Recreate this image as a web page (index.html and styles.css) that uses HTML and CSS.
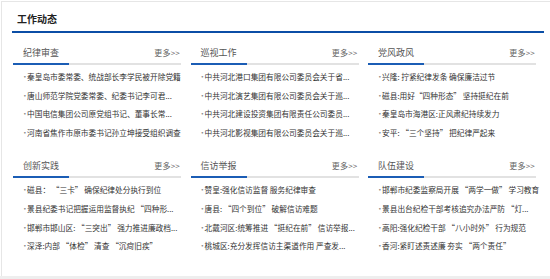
FILE: index.html
```html
<!DOCTYPE html>
<html lang="zh">
<head>
<meta charset="utf-8">
<link rel="stylesheet" href="styles.css">
</head>
<body>
<div class="panel">
  <div class="title-bar"><h2 class="title">工作动态</h2></div>
  <div class="grid">
    <section class="box">
      <div class="box-head"><span class="box-name">纪律审查</span><a class="more">更多&gt;&gt;</a></div>
      <ul class="list">
        <li>秦皇岛市委常委、统战部长李学民被开除党籍</li>
        <li>唐山师范学院党委常委、纪委书记李可君...</li>
        <li>中国电信集团公司原党组书记、董事长常...</li>
        <li>河南省焦作市原市委书记孙立坤接受组织调查</li>
      </ul>
    </section>
    <section class="box">
      <div class="box-head"><span class="box-name">巡视工作</span><a class="more">更多&gt;&gt;</a></div>
      <ul class="list">
        <li>中共河北港口集团有限公司委员会关于省...</li>
        <li>中共河北演艺集团有限公司委员会关于巡...</li>
        <li>中共河北建设投资集团有限责任公司委员...</li>
        <li>中共河北影视集团有限公司委员会关于巡...</li>
      </ul>
    </section>
    <section class="box">
      <div class="box-head"><span class="box-name">党风政风</span><a class="more">更多&gt;&gt;</a></div>
      <ul class="list">
        <li>兴隆: 拧紧纪律发条 确保廉洁过节</li>
        <li>磁县:用好“四种形态” 坚持挺纪在前</li>
        <li>秦皇岛市海港区:正风肃纪持续发力</li>
        <li>安平: “三个坚持” 把纪律严起来</li>
      </ul>
    </section>
    <section class="box">
      <div class="box-head"><span class="box-name">创新实践</span><a class="more">更多&gt;&gt;</a></div>
      <ul class="list">
        <li>磁县： “三卡” 确保纪律处分执行到位</li>
        <li>景县纪委书记把握运用监督执纪 “四种形...</li>
        <li>邯郸市邯山区: “三突出” 强力推进廉政档...</li>
        <li>深泽:内部 “体检” 清查 “沉疴旧疾”</li>
      </ul>
    </section>
    <section class="box">
      <div class="box-head"><span class="box-name">信访举报</span><a class="more">更多&gt;&gt;</a></div>
      <ul class="list">
        <li>赞皇:强化信访监督 服务纪律审查</li>
        <li>唐县: “四个到位” 破解信访难题</li>
        <li>北戴河区:统筹推进 “挺纪在前” 信访举报...</li>
        <li>桃城区:充分发挥信访主渠道作用 严查发...</li>
      </ul>
    </section>
    <section class="box">
      <div class="box-head"><span class="box-name">队伍建设</span><a class="more">更多&gt;&gt;</a></div>
      <ul class="list">
        <li>邯郸市纪委监察局开展 “两学一做” 学习教育</li>
        <li>景县出台纪检干部考核追究办法严防 “灯...</li>
        <li>高阳:强化纪检干部 “八小时外” 行为规范</li>
        <li>香河:紧盯述责述廉 夯实 “两个责任”</li>
      </ul>
    </section>
  </div>
</div>
<div class="strip"></div>
</body>
</html>
```

FILE: styles.css
```css
html, body {
  margin: 0;
  padding: 0;
  background: #ffffff;
}
body {
  font-family: "Noto Sans CJK SC", "Noto Sans", sans-serif;
  width: 550px;
  height: 279px;
  overflow: hidden;
}
.panel {
  margin: 1px 0 0 1px;
  border-top: 1px solid #e6e6e6;
  border-left: 1px solid #e6e6e6;
  height: 274px;
  box-sizing: border-box;
  height: 275px;
}
.title-bar {
  margin-left: 10px;
  width: 527px;
  padding: 10px 0 5px 5px;
  border-bottom: 2px solid #0b4ea6;
}
.title {
  margin: 0;
  font-size: 10px;
  line-height: 14px;
  font-weight: 700;
  color: #222;
}
.grid {
  display: grid;
  grid-template-columns: repeat(3, 168px);
  column-gap: 9.5px;
  row-gap: 13.5px;
  margin: 10px 0 0 11px;
}
.box-head {
  display: flex;
  align-items: flex-end;
  border-bottom: 2px solid #e2e2e2;
  padding-right: 1px;
}
.box-name {
  width: 56px;
  box-sizing: border-box;
  padding-left: 10px;
  font-size: 9px;
  line-height: 20px;
  color: #555;
  border-bottom: 2px solid #1b5db5;
  margin-bottom: -2px;
  white-space: nowrap;
}
.more {
  margin-left: auto;
  font-size: 8px;
  line-height: 20px;
  color: #666;
  letter-spacing: 0.2px;
}
.list {
  list-style: none;
  margin: 0;
  padding: 3px 0 0 0;
}
.list li {
  display: flex;
  font-size: 7.7px;
  line-height: 18.7px;
  color: #333;
  white-space: nowrap;
}
.list li::before {
  content: "·";
  width: 14px;
  padding-left: 8px;
  box-sizing: border-box;
  color: #888;
  flex: none;
}
.strip {
  height: 4px;
  background: #eeeeee;
}
```
